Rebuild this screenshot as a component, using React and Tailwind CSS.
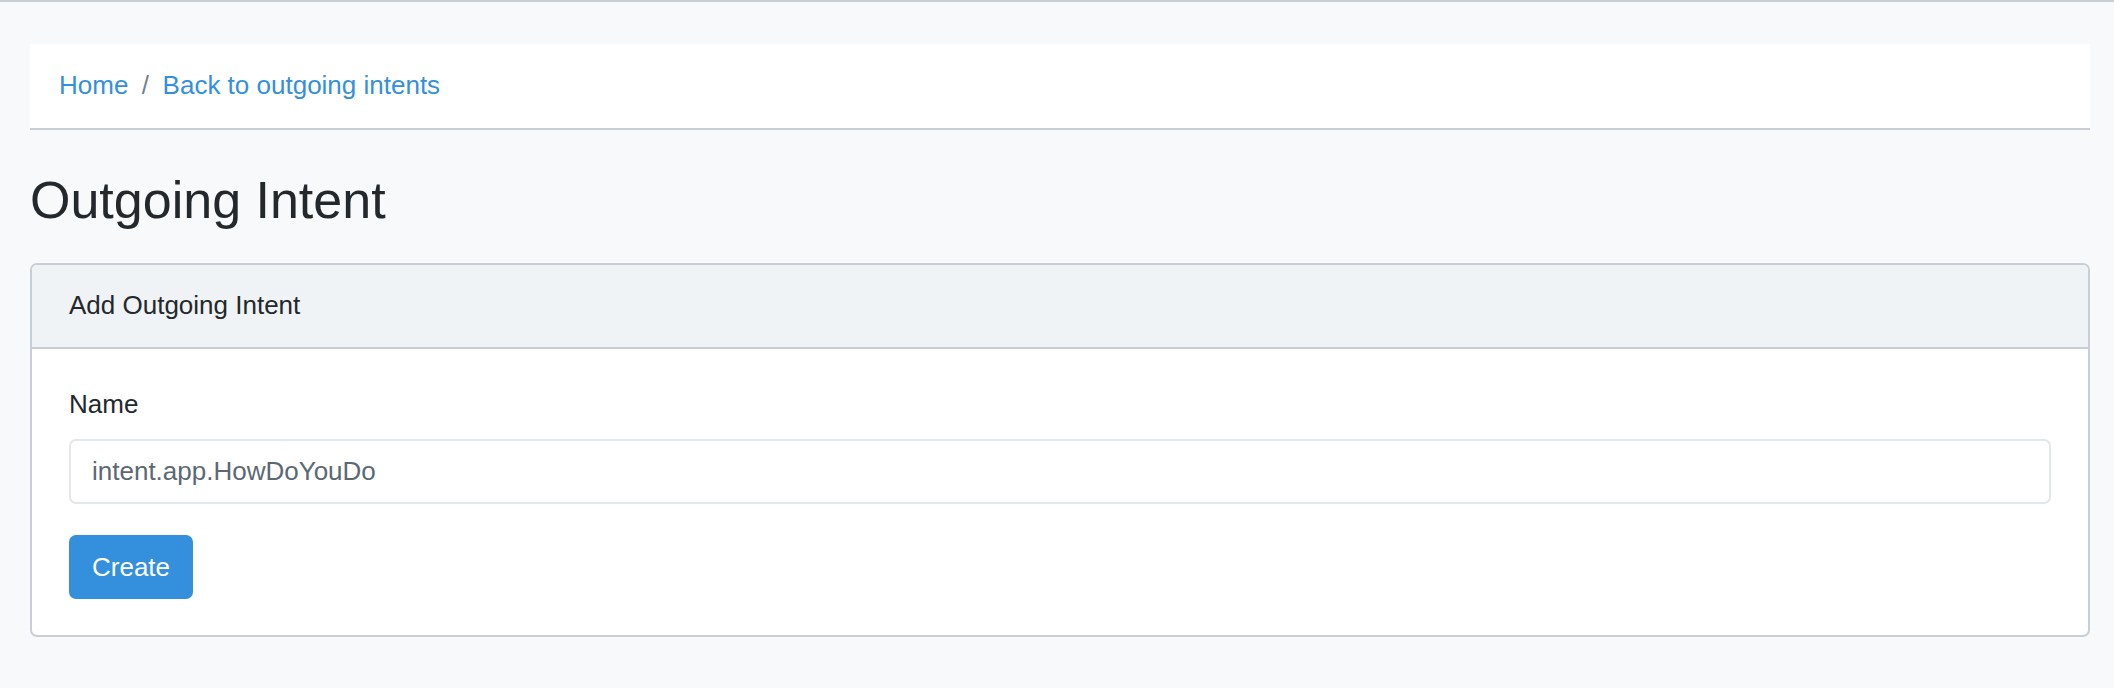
export default function App() {
  return (
    <div
      className="min-h-screen bg-[#f8f9fa] text-[#23282c] border-t-2 border-[#c8ced3]"
      style={{ fontFamily: '"Liberation Sans", Arial, sans-serif' }}
    >
      <div className="pl-[30px] pr-[24px] pt-[42px]">
        <nav className="bg-white border-b-2 border-[#c8ced3] px-[29px] py-[22px] text-[26px] leading-[39px] h-[86px]">
          <ol className="flex items-center">
            <li>
              <a href="#" className="text-[#3490dc]">
                Home
              </a>
            </li>
            <li className="flex items-center">
              <span className="px-[13.5px] text-[#73818f]">/</span>
              <a href="#" className="text-[#3490dc]">
                Back to outgoing intents
              </a>
            </li>
          </ol>
        </nav>

        <h1 className="mt-[39px] mb-[32px] text-[52px] leading-[62px] font-normal">Outgoing Intent</h1>

        <div className="bg-white border-2 border-[#c8ced3] rounded-[7px] overflow-hidden">
          <div className="bg-[#f0f3f5] border-b-2 border-[#c8ced3] px-[37px] pt-[21px] pb-[22px] text-[26px] leading-[39px]">
            Add Outgoing Intent
          </div>
          <form className="px-[37px] pt-[36px] pb-[36px]" onSubmit={(e) => e.preventDefault()}>
            <label className="block text-[26px] leading-[39px] mb-[15px]" htmlFor="name">
              Name
            </label>
            <input
              id="name"
              defaultValue="intent.app.HowDoYouDo"
              className="block w-full h-[65px] border-2 border-[#e4e7ea] rounded-[7px] px-[21px] text-[26px] text-[#5c6873] outline-none bg-white"
            />
            <button
              type="submit"
              className="mt-[31px] h-[64px] px-[23px] rounded-[7px] bg-[#3490dc] text-white text-[26px] leading-[39px]"
            >
              Create
            </button>
          </form>
        </div>
      </div>
    </div>
  )
}
